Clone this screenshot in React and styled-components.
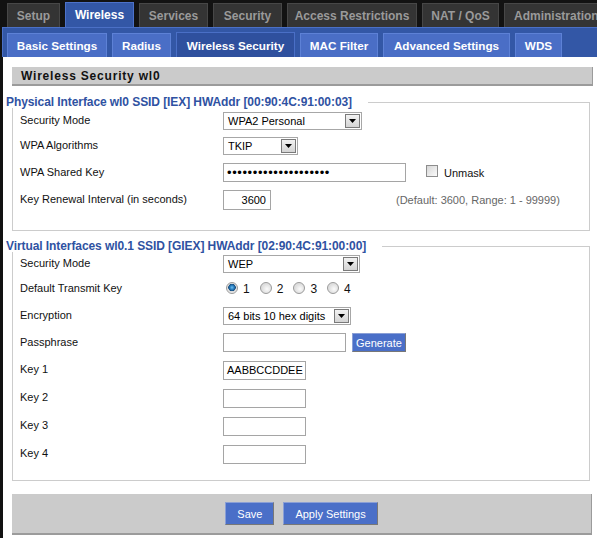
import React from "react";
import styled, { createGlobalStyle } from "styled-components";

const Global = createGlobalStyle`
  html, body { margin: 0; padding: 0; background: #121212; }
  body { font-family: "Liberation Sans", Arial, sans-serif; width: 597px; overflow: hidden; }
`;

const Page = styled.div`
  width: 597px;
  height: 538px;
  overflow: hidden;
  background: #121212;
`;

const MainNav = styled.div`
  display: flex;
  align-items: flex-end;
  gap: 5px;
  height: 27px;
  padding-left: 7px;
  white-space: nowrap;
`;

const MainTab = styled.div`
  flex: none;
  box-sizing: border-box;
  width: ${(p) => (p.$w ? `${p.$w}px` : "auto")};
  height: ${(p) => (p.$active ? 25 : 24)}px;
  padding: 0 9px;
  display: flex;
  align-items: center;
  justify-content: center;
  font-weight: bold;
  font-size: 12px;
  color: ${(p) => (p.$active ? "#ffffff" : "#9a9a9a")};
  background: ${(p) => (p.$active ? "#3357a6" : "#343434")};
  border: 1px solid ${(p) => (p.$active ? "#4d72c9" : "#474747")};
  border-bottom: none;
`;

const SubNav = styled.div`
  margin-left: 2px;
  height: 30px;
  box-sizing: border-box;
  background: #3357a6;
  border-top: 1px solid #4b70c6;
  border-left: 1px solid #4b70c6;
  display: flex;
  align-items: flex-end;
  gap: 5px;
  padding-left: 4px;
  white-space: nowrap;
`;

const SubTab = styled.div`
  flex: none;
  box-sizing: border-box;
  width: ${(p) => p.$w}px;
  height: ${(p) => (p.$active ? 25 : 24)}px;
  display: flex;
  align-items: center;
  justify-content: center;
  font-weight: bold;
  font-size: 11.7px;
  color: #ffffff;
  background: ${(p) => (p.$active ? "#2f509e" : "#4a6ec6")};
  border: 1px solid ${(p) => (p.$active ? "#4a6fc6" : "#5d81d6")};
  border-bottom: none;
`;

const Content = styled.div`
  margin-left: 3px;
  background: #ffffff;
  padding: 10px 4px 10px 9px;
  height: 481px;
  box-sizing: border-box;
`;

const SectionHeader = styled.div`
  height: 19px;
  box-sizing: border-box;
  background: #cbcbcb;
  border-bottom: 2px solid #9b9b9b;
  border-right: 1px solid #9b9b9b;
  padding-left: 9px;
  display: flex;
  align-items: center;
  font-weight: bold;
  font-size: 12px;
  letter-spacing: 0.8px;
  color: #111;
`;

const Fieldset = styled.fieldset`
  margin: ${(p) => p.$mt}px 3px 0 0;
  padding: 0 0 ${(p) => p.$pb}px 0;
  border: 1px solid #cccccc;
  min-width: 0;
`;

const Legend = styled.legend`
  margin-left: -7px;
  padding: 0 16px 0 0;
  font-weight: bold;
  font-size: 12px;
  letter-spacing: -0.08px;
  line-height: 12px;
  color: #2f52a2;
`;

const Row = styled.div`
  display: flex;
  align-items: center;
  height: ${(p) => p.$h}px;
  padding-left: 7px;
`;

const Label = styled.div`
  width: 203px;
  flex: none;
  font-size: 11px;
  color: #111;
  margin-top: -2px;
`;

const SelectBox = styled.div`
  position: relative;
  box-sizing: border-box;
  width: ${(p) => p.$w}px;
  height: 18px;
  border: 1px solid #a7a7a7;
  background: #fff;
  font-size: 11px;
  color: #000;
  display: flex;
  align-items: center;
  padding-left: 4px;
`;

const Arrow = styled.div`
  position: absolute;
  right: 1px;
  top: 1px;
  width: 15px;
  height: 14px;
  box-sizing: border-box;
  border: 1px solid #7a7a7a;
  background: linear-gradient(#f2f2f2, #d4d4d4);
  display: flex;
  align-items: center;
  justify-content: center;
`;

const TextBox = styled.div`
  box-sizing: border-box;
  width: ${(p) => p.$w}px;
  height: ${(p) => p.$h || 19}px;
  border: 1px solid #a5a5a5;
  background: #fff;
  font-size: ${(p) => (p.$dots ? 13 : 11)}px;
  color: #000;
  display: flex;
  align-items: center;
  justify-content: ${(p) => (p.$right ? "flex-end" : "flex-start")};
  padding: 0 ${(p) => (p.$right ? 4 : 3)}px 0 3px;
  letter-spacing: ${(p) => (p.$dots ? "0.6px" : "0")};
  overflow: hidden;
  white-space: nowrap;
`;

const CheckWrap = styled.div`
  display: flex;
  align-items: center;
  margin-left: 20px;
  gap: 6px;
  font-size: 11px;
  color: #111;
`;

const CheckBox = styled.span`
  width: 12px;
  height: 12px;
  box-sizing: border-box;
  border: 1px solid #8d8d8d;
  background: linear-gradient(135deg, #d6d6d6, #fbfbfb);
  margin-top: -4px;
`;

const Hint = styled.div`
  margin-left: 125px;
  font-size: 11px;
  color: #666;
`;

const RadioGroup = styled.div`
  display: flex;
  align-items: center;
  padding-left: 3px;
`;

const RadioItem = styled.label`
  display: flex;
  align-items: center;
  gap: 5px;
  margin-right: 10px;
  font-size: 12px;
  color: #111;
`;

const RadioDot = styled.span`
  width: 12px;
  height: 12px;
  box-sizing: border-box;
  border-radius: 50%;
  border: 1px solid #9a9a9a;
  background: ${(p) =>
    p.$on
      ? "radial-gradient(circle at 50% 45%, #6ec0f0 0, #2a7fc0 2px, #174d7e 3.5px, #d8d8d8 4px, #f6f6f6 6px)"
      : "radial-gradient(circle at 60% 60%, #fbfbfb 0, #dedede 5px)"};
  margin-top: -3px;
`;

const BlueButton = styled.button`
  box-sizing: border-box;
  height: ${(p) => p.$h}px;
  padding: 0 ${(p) => p.$px}px;
  margin-left: ${(p) => p.$ml || 0}px;
  font-family: "Liberation Sans", Arial, sans-serif;
  font-size: 11px;
  color: #fff;
  background: #4a6fc8;
  border: 1px solid;
  border-color: #8a9fd6 #777 #777 #8a9fd6;
  cursor: pointer;
`;

const ButtonBar = styled.div`
  margin-top: 13px;
  margin-right: 1px;
  height: 41px;
  box-sizing: border-box;
  background: #cbcbcb;
  border-bottom: 2px solid #9b9b9b;
  border-right: 1px solid #9b9b9b;
  display: flex;
  align-items: center;
  justify-content: center;
  gap: 9px;
`;

const Select = ({ w, children }) => (
  <SelectBox $w={w}>
    {children}
    <Arrow>
      <svg width="7" height="4" viewBox="0 0 7 4">
        <path d="M0 0h7L3.5 4z" fill="#000" />
      </svg>
    </Arrow>
  </SelectBox>
);

const mainTabs = [
  ["Setup", 53],
  ["Wireless", 69],
  ["Services", 69],
  ["Security", 69],
  ["Access Restrictions", 130],
  ["NAT / QoS", 77],
  ["Administration", 0],
];
const subTabs = [
  ["Basic Settings", 100],
  ["Radius", 59],
  ["Wireless Security", 119],
  ["MAC Filter", 78],
  ["Advanced Settings", 127],
  ["WDS", 47],
];

export default function App() {
  return (
    <Page>
      <Global />
      <MainNav>
        {mainTabs.map(([t, w]) => (
          <MainTab key={t} $w={w} $active={t === "Wireless"}>{t}</MainTab>
        ))}
      </MainNav>
      <SubNav>
        {subTabs.map(([t, w]) => (
          <SubTab key={t} $w={w} $active={t === "Wireless Security"}>{t}</SubTab>
        ))}
      </SubNav>
      <Content>
        <SectionHeader>Wireless Security wl0</SectionHeader>

        <Fieldset $mt={10} $pb={16}>
          <Legend>Physical Interface wl0 SSID [IEX] HWAddr [00:90:4C:91:00:03]</Legend>
          <Row $h={25}>
            <Label>Security Mode</Label>
            <Select w={139}>WPA2 Personal</Select>
          </Row>
          <Row $h={26}>
            <Label>WPA Algorithms</Label>
            <Select w={75}>TKIP</Select>
          </Row>
          <Row $h={27}>
            <Label>WPA Shared Key</Label>
            <TextBox $w={183} $dots>••••••••••••••••••••</TextBox>
            <CheckWrap>
              <CheckBox />
              <span>Unmask</span>
            </CheckWrap>
          </Row>
          <Row $h={28}>
            <Label>Key Renewal Interval (in seconds)</Label>
            <TextBox $w={48} $h={20} $right>3600</TextBox>
            <Hint>(Default: 3600, Range: 1 - 99999)</Hint>
          </Row>
        </Fieldset>

        <Fieldset $mt={9} $pb={12}>
          <Legend>Virtual Interfaces wl0.1 SSID [GIEX] HWAddr [02:90:4C:91:00:00]</Legend>
          <Row $h={24}>
            <Label>Security Mode</Label>
            <Select w={137}>WEP</Select>
          </Row>
          <Row $h={26}>
            <Label>Default Transmit Key</Label>
            <RadioGroup>
              {[1, 2, 3, 4].map((n) => (
                <RadioItem key={n}>
                  <RadioDot $on={n === 1} />
                  {n}
                </RadioItem>
              ))}
            </RadioGroup>
          </Row>
          <Row $h={27}>
            <Label>Encryption</Label>
            <Select w={128}>64 bits 10 hex digits</Select>
          </Row>
          <Row $h={27}>
            <Label>Passphrase</Label>
            <TextBox $w={123} />
            <BlueButton $h={19} $px={3} $ml={6}>Generate</BlueButton>
          </Row>
          <Row $h={28}>
            <Label>Key 1</Label>
            <TextBox $w={83}>AABBCCDDEE</TextBox>
          </Row>
          <Row $h={28}>
            <Label>Key 2</Label>
            <TextBox $w={83} />
          </Row>
          <Row $h={28}>
            <Label>Key 3</Label>
            <TextBox $w={83} />
          </Row>
          <Row $h={28}>
            <Label>Key 4</Label>
            <TextBox $w={83} />
          </Row>
        </Fieldset>

        <ButtonBar>
          <BlueButton $h={23} $px={11}>Save</BlueButton>
          <BlueButton $h={23} $px={11}>Apply Settings</BlueButton>
        </ButtonBar>
      </Content>
    </Page>
  );
}
